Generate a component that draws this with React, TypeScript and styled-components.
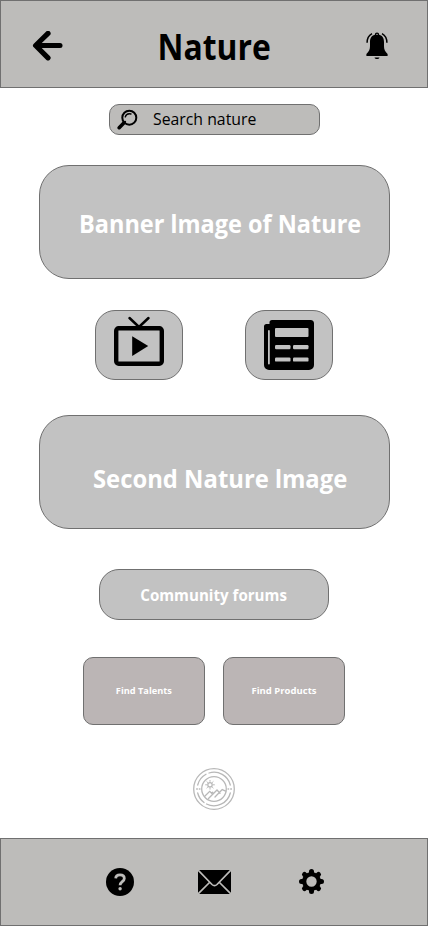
import React from "react";
import styled, { createGlobalStyle } from "styled-components";

const GlobalStyle = createGlobalStyle`
  *, *::before, *::after { box-sizing: border-box; }
  body { margin: 0; background: #fff; }
  svg { display: block; flex: none; }
  button { font: inherit; color: inherit; padding: 0; margin: 0; background: none; border: 0; }
`;

const Screen = styled.div`
  width: 428px;
  height: 926px;
  display: flex;
  flex-direction: column;
  background: #fff;
  color: #000;
  font-family: "Open Sans", "Noto Sans", sans-serif;
`;

const Header = styled.header`
  height: 88px;
  flex: none;
  display: flex;
  align-items: center;
  justify-content: space-between;
  padding: 4px 39px 0 31px;
  background: #bdbcba;
  border: 1px solid #707070;
`;

const Text = styled.span<{ $size: number; $weight?: number; $condense?: number; $origin?: string; $x?: number; $y?: number }>`
  font-size: ${(p) => p.$size}px;
  font-weight: ${(p) => p.$weight ?? 700};
  transform: scaleX(${(p) => p.$condense ?? 1});
  transform-origin: ${(p) => p.$origin ?? "center"};
  line-height: 1.36;
  white-space: nowrap;
  margin-left: ${(p) => p.$x ?? 0}px;
  margin-top: ${(p) => p.$y ?? 0}px;
`;

const Title = styled(Text).attrs({ as: "h1" })`
  margin-bottom: 0;
`;

const PlainI = styled.span`
  font-family: Roboto, "Liberation Sans", sans-serif;
`;

const Content = styled.main`
  flex: 1;
  display: flex;
  flex-direction: column;
  align-items: center;
  padding-top: 16px;
`;

const Search = styled.label`
  width: 211px;
  height: 31px;
  display: flex;
  align-items: center;
  padding-left: 7px;
  background: #bdbcba;
  border: 1px solid #707070;
  border-radius: 10px;
`;

const Banner = styled.section<{ $top: number }>`
  width: 351px;
  height: 114px;
  display: flex;
  align-items: center;
  padding-left: 40px;
  margin-top: ${(p) => p.$top}px;
  margin-left: 1px;
  color: #fff;
  background: #c2c2c2;
  border: 1px solid #707070;
  border-radius: 30px;
`;

const Row = styled.div<{ $gap: number; $top: number }>`
  display: flex;
  gap: ${(p) => p.$gap}px;
  margin-top: ${(p) => p.$top}px;
`;

const Tile = styled.button<{ $lift?: number }>`
  width: 88px;
  height: 70px;
  display: flex;
  align-items: center;
  justify-content: center;
  padding-bottom: ${(p) => p.$lift ?? 0}px;
  background: #c2c2c2;
  border: 1px solid #707070;
  border-radius: 20px;
`;

const Forums = styled.button`
  width: 230px;
  height: 51px;
  display: flex;
  align-items: center;
  justify-content: center;
  margin-top: 40px;
  color: #fff;
  background: #c2c2c2;
  border: 1px solid #707070;
  border-radius: 20px;
`;

const FindCard = styled.button`
  width: 122px;
  height: 68px;
  display: flex;
  align-items: center;
  justify-content: center;
  color: #fff;
  background: #bbb5b5;
  border: 1px solid #707070;
  border-radius: 10px;
`;

const Emblem = styled.div`
  margin-top: 43px;
`;

const Footer = styled.footer`
  height: 88px;
  flex: none;
  display: flex;
  align-items: center;
  padding: 0 0 1px 105px;
  background: #bdbcba;
  border: 1px solid #707070;
`;

const NavButton = styled.button<{ $left?: number }>`
  margin-left: ${(p) => p.$left ?? 0}px;
`;

const BackIcon = () => (
  <svg width="31" height="31" viewBox="0 0 31 31" fill="none" stroke="#000" strokeWidth="5.2" strokeLinecap="round" strokeLinejoin="round">
    <path d="M28 14.500H5" strokeWidth="5" />
    <path d="M16 2.400 3.600 14.500 16 26.800" />
  </svg>
);

const BellIcon = () => (
  <svg width="22" height="28" viewBox="0 0 22 28">
    <path d="M8.800 2.800a2.200 2.200 0 0 1 4.400 0C16.800 3.800 18 6.500 18 10v4c0 3.500 .8 5 3.600 8.100V24H.4v-1.900C3.200 19 4 17.500 4 14v-4c0-3.500 1.200-6.200 4.800-7.200Z" />
    <circle cx="11" cy="2.400" r=".7" fill="#bdbcba" />
    <path d="M1.100 10.800C1.100 6.500 3 3.300 6 1.700M20.900 10.800C20.900 6.500 19 3.300 16 1.700" fill="none" stroke="#000" strokeWidth="1.500" />
    <path d="M8.500 25.500h5c-.5 2-4.500 2-5 0Z" />
  </svg>
);

const SearchIcon = () => (
  <svg width="21" height="21" viewBox="0 0 21 21" fill="none" stroke="#000" strokeLinecap="round">
    <circle cx="12.300" cy="8.700" r="7" strokeWidth="2" />
    <path d="M8.200 8c.8-2.500 3.200-3.700 5.800-3" strokeWidth="1.300" />
    <path d="m2.200 18.700 4.600-4.600" strokeWidth="3.600" />
    <path d="m6.600 14.200 1.500-1.500" strokeWidth="2" />
  </svg>
);

const TvIcon = () => (
  <svg width="50" height="50" viewBox="0 0 50 50" fill="none" stroke="#000">
    <rect x="2.200" y="12.200" width="45.600" height="35.600" rx="2.500" strokeWidth="4.400" />
    <path d="M15.500 2 25 11 34.500 2" strokeWidth="2.500" strokeLinecap="round" />
    <path d="M18.200 20.300v19.600L34.200 30Z" fill="#000" stroke="none" />
  </svg>
);

const NewsIcon = () => (
  <svg width="50" height="50" viewBox="0 0 50 50">
    <path d="M8 0h38.500A3.500 3.500 0 0 1 50 3.500V45a5 5 0 0 1-5 5H5a5 5 0 0 1-5-5V6.500A2.500 2.500 0 0 1 2.500 4H5.500V2.500A2.500 2.500 0 0 1 8 0Z" />
    <g fill="#c2c2c2">
      <rect x="4" y="10" width="1.800" height="34.500" rx=".9" />
      <rect x="11" y="8" width="33.500" height="9" rx="1" />
      <rect x="11" y="25" width="15.500" height="4.200" rx="1.200" />
      <rect x="29" y="25" width="15.500" height="4.200" rx="1.200" />
      <rect x="11" y="37.400" width="15.500" height="4.200" rx="1.200" />
      <rect x="29" y="37.400" width="15.500" height="4.200" rx="1.200" />
    </g>
  </svg>
);

const EmblemIcon = () => (
  <svg width="42" height="42" viewBox="0 0 42 42" fill="none" stroke="#b8b8b8" strokeWidth="1.300" strokeLinecap="round">
    <circle cx="21" cy="21" r="20.300" />
    <path d="M4.700 17A16.800 16.800 0 0 1 13 6.200M16 5a16.800 16.800 0 0 1 21.300 12M4.700 25A16.800 16.800 0 0 0 11 34.500M13.500 36A16.800 16.800 0 0 0 37.300 25" />
    <circle cx="21" cy="21" r="12.300" />
    <path d="M3.600 21h.8M6.300 21h.7M35 21h.7M37.700 21h.8" />
    <circle cx="17" cy="16.800" r="2.200" />
    <path d="M17 12.400v1M17 20.200v1M12.600 16.800h1M20.400 16.800h1M13.900 13.700l.7.700M19.400 19.200l.7.700M20.100 13.700l-.7.700M14.600 19.200l-.7.700" strokeWidth="1" />
    <path d="m11.500 28.500 5.200-5.200 2 2 1-1M15.500 30.500l8.500-8.500 3 3.200M22 29l7.200-7.400 3.500 1.500" />
  </svg>
);

const HelpIcon = () => (
  <svg width="28" height="28" viewBox="0 0 28 28" fill="none">
    <circle cx="14" cy="14" r="14" fill="#000" />
    <path d="M9.700 10.400C9.800 8 11.500 6.900 14 6.900c2.600 0 4.300 1.300 4.300 3.500 0 3.300-4.200 3.300-4.200 6.900" stroke="#bdbcba" strokeWidth="2.800" />
    <circle cx="14.100" cy="20.800" r="1.700" fill="#bdbcba" />
  </svg>
);

const MailIcon = () => (
  <svg width="33" height="24" viewBox="0 0 33 24">
    <path d="M0 0h33v24H0Z" />
    <path d="m0 0 14 14.500c1.600 1.500 3.400 1.500 5 0L33 0M0 24l11.500-11.500M33 24 21.500 12.500" fill="none" stroke="#bdbcba" strokeWidth="1.700" />
  </svg>
);

const GearIcon = () => (
  <svg width="25" height="25" viewBox="-12.5 -12.5 25 25">
    <circle r="7.300" fill="none" stroke="#000" strokeWidth="4.200" />
    <path d="M0-8.500V-10M0 8.500V10M-8.500 0H-10M8.500 0H10M-6-6-7-7M6-6 7-7M-6 6-7 7M6 6 7 7" stroke="#000" strokeWidth="5" strokeLinecap="round" />
  </svg>
);

export default function App() {
  return (
    <>
      <GlobalStyle />
      <Screen>
        <Header>
          <button aria-label="Back"><BackIcon /></button>
          <Title $size={35} $condense={0.91} $y={2}>Nature</Title>
          <button aria-label="Notifications"><BellIcon /></button>
        </Header>
        <Content>
          <Search>
            <SearchIcon />
            <Text $size={17} $weight={400} $condense={0.93} $origin="left" $x={15} $y={-1}>Search nature</Text>
          </Search>
          <Banner $top={30}>
            <Text $size={25} $condense={0.94} $origin="left" $x={-1} $y={4}>Banner <PlainI>I</PlainI>mage of Nature</Text>
          </Banner>
          <Row $gap={62} $top={31}>
            <Tile aria-label="Watch" $lift={8}><TvIcon /></Tile>
            <Tile aria-label="News"><NewsIcon /></Tile>
          </Row>
          <Banner $top={35}>
            <Text $size={25} $condense={0.953} $origin="left" $x={13} $y={14}>Second Nature <PlainI>I</PlainI>mage</Text>
          </Banner>
          <Forums><Text $size={16} $condense={0.945} $y={2}>Community forums</Text></Forums>
          <Row $gap={18} $top={37}>
            <FindCard><Text $size={9.5} $condense={0.97} $y={1}>Find Talents</Text></FindCard>
            <FindCard><Text $size={9.5} $y={1}>Find Products</Text></FindCard>
          </Row>
          <Emblem><EmblemIcon /></Emblem>
        </Content>
        <Footer>
          <NavButton aria-label="Help"><HelpIcon /></NavButton>
          <NavButton aria-label="Messages" $left={64}><MailIcon /></NavButton>
          <NavButton aria-label="Settings" $left={68}><GearIcon /></NavButton>
        </Footer>
      </Screen>
    </>
  );
}
